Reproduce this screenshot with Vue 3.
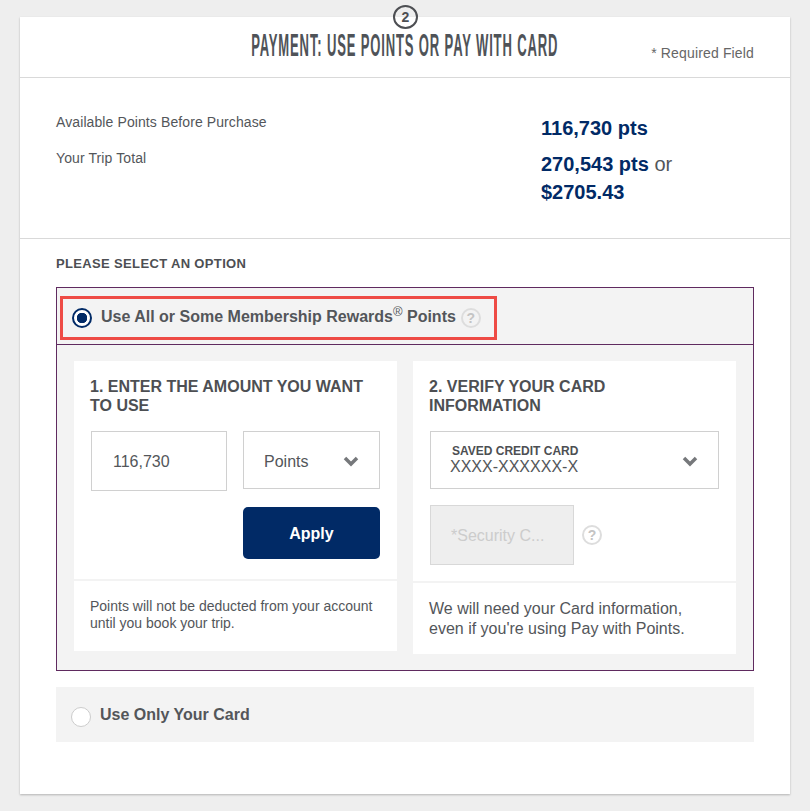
<script setup>
import { ref } from 'vue'

// Opción de pago seleccionada
const opcion = ref('points')
const puntos = ref('116,730')
</script>

<template>
  <div class="page">
    <section class="card">
      <span class="step">2</span>

      <header class="head">
        <h2 class="title"><span>PAYMENT: USE POINTS OR PAY WITH CARD</span></h2>
        <span class="required">* Required Field</span>
      </header>

      <div class="summary">
        <div class="row">
          <span class="label">Available Points Before Purchase</span>
          <span class="value"><b>116,730 pts</b></span>
        </div>
        <div class="row">
          <span class="label">Your Trip Total</span>
          <span class="value"><b>270,543 pts</b> or <b>$2705.43</b></span>
        </div>
      </div>

      <div class="options">
        <h4 class="select-title">PLEASE SELECT AN OPTION</h4>

        <div class="option-open">
          <div class="option-head">
            <div class="highlight" @click="opcion = 'points'">
              <span class="radio" :class="{ on: opcion === 'points' }"></span>
              <span class="option-label">Use All or Some Membership Rewards<sup>®</sup> Points</span>
              <span class="help light">?</span>
            </div>
          </div>

          <div class="panels">
            <div class="panel">
              <div class="panel-main">
                <h3>1. ENTER THE AMOUNT YOU WANT TO USE</h3>
                <div class="amount">
                  <input v-model="puntos" class="field-input" type="text">
                  <div class="select">
                    <span class="select-text">Points</span>
                    <svg class="chev" viewBox="0 0 16 11"><path d="M2 2l6 6 6-6" /></svg>
                  </div>
                  <button class="apply" type="button">Apply</button>
                </div>
              </div>
              <p class="note small">Points will not be deducted from your account until you book your trip.</p>
            </div>

            <div class="panel">
              <div class="panel-main">
                <h3>2. VERIFY YOUR CARD INFORMATION</h3>
                <div class="select saved">
                  <div class="saved-text">
                    <small>SAVED CREDIT CARD</small>
                    <span>XXXX-XXXXXX-X</span>
                  </div>
                  <svg class="chev" viewBox="0 0 16 11"><path d="M2 2l6 6 6-6" /></svg>
                </div>
                <div class="security">
                  <input class="field-input sec" type="text" placeholder="*Security C..." disabled>
                  <span class="help">?</span>
                </div>
              </div>
              <p class="note">We will need your Card information, even if you're using Pay with Points.</p>
            </div>
          </div>
        </div>

        <div class="option-closed" @click="opcion = 'card'">
          <span class="radio blank" :class="{ on: opcion === 'card' }"></span>
          <span class="option-label">Use Only Your Card</span>
        </div>
      </div>
    </section>
  </div>
</template>

<style>
html,
body {
  margin: 0;
  background: #eee;
}
</style>

<style scoped>
.page {
  padding: 17px 20px;
  font-family: "Liberation Sans", Arial, sans-serif;
  color: #53565a;
}

.card {
  position: relative;
  height: 777px;
  box-sizing: border-box;
  background: #fff;
  box-shadow: 0 1px 2px rgba(0, 0, 0, 0.25);
}

/* Círculo del paso, medio fuera de la tarjeta */
.step {
  position: absolute;
  top: -12px;
  left: 373px;
  width: 21px;
  height: 20px;
  border: 2px solid #4d4f53;
  border-radius: 50%;
  color: #4d4f53;
  font-size: 14px;
  font-weight: bold;
  line-height: 20px;
  text-align: center;
}

.head {
  position: relative;
  height: 60px;
  border-bottom: 1px solid #d9d9d9;
}

.title {
  margin: 0;
  padding-top: 15px;
  text-align: center;
  font-size: 31px;
  font-weight: bold;
  line-height: 28px;
  letter-spacing: 2px;
  color: #4f5358;
  white-space: nowrap;
}

.title span {
  display: inline-block;
  transform: scaleX(0.421);
}

.required {
  position: absolute;
  right: 36px;
  top: 28px;
  font-size: 14px;
  letter-spacing: 0.15px;
  color: #666;
}

.summary {
  height: 161px;
  box-sizing: border-box;
  padding: 34px 36px 0;
  border-bottom: 1px solid #d9d9d9;
}

.row {
  display: grid;
  grid-template-columns: 485px 1fr;
}

.label {
  font-size: 14px;
  line-height: 18px;
  letter-spacing: 0.1px;
  padding-top: 1px;
}

.value {
  font-size: 20px;
  line-height: 28px;
  padding-top: 2px;
  margin-bottom: 6px;
  color: #53565a;
}

.value b {
  color: #012a66;
}

.options {
  padding: 0 36px;
}

.select-title {
  margin: 0;
  padding: 18px 0 16px;
  font-size: 13px;
  line-height: 14px;
  letter-spacing: 0.35px;
  font-weight: bold;
  color: #4d4f53;
}

.option-open {
  border: 1px solid #5f2a5f;
  background: #f3f3f3;
}

.option-head {
  height: 57px;
  box-sizing: border-box;
  padding: 8px 3px 0;
  border-bottom: 1px solid #5f2a5f;
}

.highlight {
  display: inline-flex;
  align-items: center;
  width: 437px;
  height: 44px;
  box-sizing: border-box;
  padding-left: 9px;
  border: 3px solid #ee4b45;
  cursor: pointer;
}

.highlight .option-label {
  margin-top: -2px;
}

.radio {
  flex: none;
  width: 20px;
  height: 20px;
  box-sizing: border-box;
  border: 1px solid #ccc;
  border-radius: 50%;
  background: #fff;
}

.radio.on {
  border: 2px solid #012a66;
  background: radial-gradient(circle, #012a66 0 5px, #fff 5.5px);
}

.option-label {
  margin-left: 9px;
  font-size: 16px;
  font-weight: bold;
  color: #53565a;
}

sup {
  font-size: 13px;
  font-weight: normal;
  line-height: 0;
}

.help {
  flex: none;
  width: 20px;
  height: 20px;
  box-sizing: border-box;
  border: 2px solid #ddd;
  border-radius: 50%;
  background: #fff;
  color: #c4c4c4;
  font-size: 14px;
  font-weight: bold;
  line-height: 16px;
  text-align: center;
}

.help.light {
  margin-left: 5px;
  background: #f3f3f3;
}

.panels {
  display: grid;
  grid-template-columns: 323px 323px;
  gap: 16px;
  align-items: start;
  padding: 16px 17px;
  height: 325px;
  box-sizing: border-box;
}

.panel {
  background: #fff;
}

h3 {
  margin: 0;
  font-size: 16px;
  line-height: 19px;
  font-weight: bold;
  color: #4d4f53;
}

.panel-main {
  padding: 16px 16px 0;
}

.amount {
  display: grid;
  grid-template-columns: 136px 137px;
  gap: 16px;
  margin-top: 16px;
  margin-left: 1px;
  align-items: start;
}

.field-input {
  width: 100%;
  height: 60px;
  box-sizing: border-box;
  padding: 2px 20px 0 21px;
  border: 1px solid #d0d0d0;
  border-radius: 0;
  background: #fff;
  font-family: inherit;
  font-size: 16px;
  color: #53565a;
  outline: none;
}

.select {
  display: flex;
  align-items: center;
  justify-content: space-between;
  height: 58px;
  box-sizing: border-box;
  padding: 2px 20px 0;
  border: 1px solid #d0d0d0;
  font-size: 16px;
  color: #53565a;
}

.select-text {
  padding-top: 2px;
}

.chev {
  width: 16px;
  height: 11px;
  fill: none;
  stroke: #76787b;
  stroke-width: 3.5;
}

.apply {
  grid-column: 2;
  height: 52px;
  padding-top: 3px;
  border: none;
  border-radius: 5px;
  background: #012a66;
  color: #fff;
  font-family: inherit;
  font-size: 16px;
  font-weight: bold;
  cursor: pointer;
}

.note {
  margin: 16px 0 0;
  padding: 16px 16px 15px;
  border-top: 2px solid #f3f3f3;
  font-size: 16px;
  line-height: 20px;
  color: #53565a;
}

.note.small {
  margin-top: 20px;
  padding: 17px 16px 19px;
  font-size: 14px;
  line-height: 17px;
}

.saved {
  width: 289px;
  margin: 16px 0 0 1px;
}

.saved-text {
  display: flex;
  flex-direction: column;
  margin-top: -3px;
}

.saved-text small {
  margin-left: 1px;
  font-size: 12px;
  line-height: 14px;
  font-weight: bold;
  color: #4d4f53;
}

.saved-text span {
  margin-left: -1px;
  font-size: 16px;
  line-height: 17px;
}

.security {
  display: flex;
  align-items: center;
  gap: 8px;
  margin: 16px 0 0 1px;
}

.field-input.sec {
  width: 144px;
  padding-left: 20px;
  background: #eee;
  border-color: #d8d8d8;
}

.field-input.sec::placeholder {
  color: #ccc;
  opacity: 1;
}

.option-closed {
  display: flex;
  align-items: center;
  height: 55px;
  margin-top: 16px;
  padding-left: 15px;
  background: #f3f3f3;
  cursor: pointer;
}

.radio.blank {
  margin-top: 4px;
}

.option-closed .option-label {
  margin-left: 9px;
}
</style>
